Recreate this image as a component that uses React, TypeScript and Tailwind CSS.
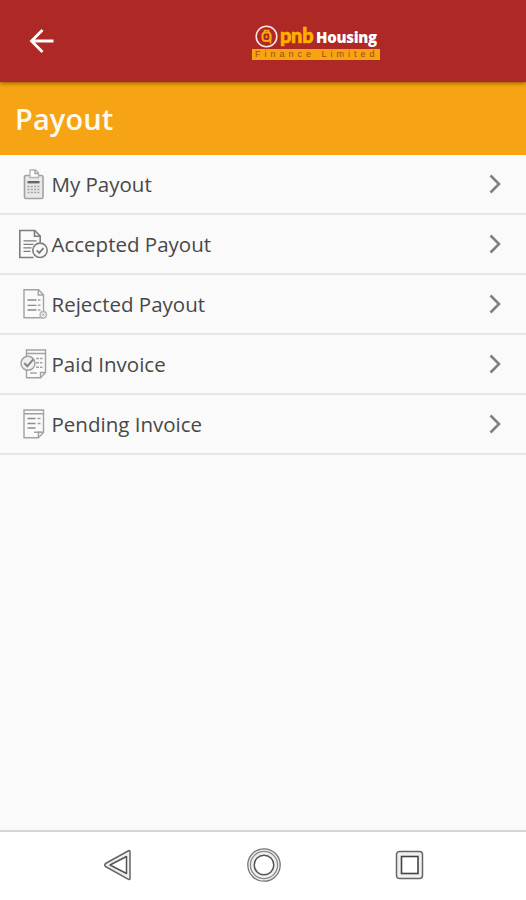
import { ReactNode } from "react";

const CalculatorIcon = () => (
  <>
    <rect x="6.500" y="7.500" width="18.500" height="23" rx="1.500" fill="#e9e9e9" strokeWidth="1.600" />
    <path d="M12 9.500V2h5.500L20.500 5v4.500z" fill="#fff" stroke="#b5b5b5" />
    <path d="M17 2v3.500h3.500" />
    <path d="M9.500 14.200h12" stroke="#666" strokeWidth="2.400" />
    <path d="M9.500 18.500h12M9.500 21.500h12M9.500 24.500h12" strokeDasharray="2 1.300" strokeWidth="1.600" />
  </>
);

const AcceptedIcon = () => (
  <g stroke="#7c7c7c" strokeWidth="1.600">
    <path d="M15.500 29.500H1.800V2.500h15l5.400 5.500v6.500" />
    <path d="M16.500 2.500V8.300h5.500" />
    <path d="M5.500 12.800h13M5.500 16.300h10M5.500 19.800h8M5.500 23.300h7" strokeWidth="1.200" />
    <circle cx="22" cy="22.300" r="7.200" fill="#fafafa" />
    <path d="M18.700 22.300l2.500 2.500 4.300-4.600" strokeWidth="1.900" />
  </g>
);

const RejectedIcon = () => (
  <>
    <path d="M6 1.800h14.500l5 5V29.800H6z" />
    <path d="M20.300 2v5h5" />
    <path d="M9.500 12h9M9.500 17.300h9M9.500 22h9" strokeWidth="1.300" stroke="#8c8c8c" />
    <path d="M20 12h2.500M20 17.300h2.500M20 22h2.500" />
    <circle cx="25.300" cy="26.700" r="3.200" fill="#f0f0f0" stroke="#b5b5b5" />
    <path d="M24.200 25.600l2.200 2.200M26.400 25.600l-2.200 2.200" strokeWidth="0.900" />
  </>
);

const PaidIcon = () => (
  <>
    <path d="M8.500 2h19v22.500l-5 5.300h-14z" />
    <path d="M22.500 29.500v-5h5M9 5.500h18" />
    <path d="M18 10.500h6.500M18 14.800h6.500M18 19.200h6.500" strokeDasharray="3 1" />
    <path d="M12 25h7" />
    <circle cx="10" cy="15.300" r="7" fill="#f0f0f0" strokeWidth="1.500" />
    <path d="M6.300 15l3 3.200 6-6.800" stroke="#858585" strokeWidth="2" />
  </>
);

const PendingIcon = () => (
  <>
    <path d="M6 2h19.500v22.500l-5.200 5.300H6z" />
    <path d="M20.300 29.500l.3-5.500 4.900.3M6 5.800h19.500" />
    <path d="M9.500 10.500h8M9.500 15.500h8M9.500 20h8" stroke="#8c8c8c" strokeWidth="1.300" />
    <path d="M19.500 10.500h3M19.500 15.500h3M16 24.300h4.500" />
  </>
);

const items: { label: string; icon: ReactNode }[] = [
  { label: "My Payout", icon: <CalculatorIcon /> },
  { label: "Accepted Payout", icon: <AcceptedIcon /> },
  { label: "Rejected Payout", icon: <RejectedIcon /> },
  { label: "Paid Invoice", icon: <PaidIcon /> },
  { label: "Pending Invoice", icon: <PendingIcon /> },
];

const Logo = () => (
  <div className="ml-[197px] mt-[24px] w-[128px]">
    <div className="flex h-[25px] items-center pl-[3px]">
      <svg width="23" height="24" viewBox="0 0 23 24" fill="none">
        <circle cx="11.500" cy="11.500" r="10.300" stroke="#fbe3df" strokeWidth="1.600" />
        <rect x="7.500" y="7.500" width="8" height="8.500" rx="3" stroke="#f8a90f" strokeWidth="2" />
        <path d="M15.500 10v8.500M9.500 7V5.500h4V7M11.500 10.500v2.500" stroke="#f8a90f" strokeWidth="1.700" />
      </svg>
      <span className="-mt-[3px] ml-[2px] w-[35px] whitespace-nowrap font-['Lato'] text-[20px] font-black leading-6 tracking-[-0.300px] text-[#ffb000] [-webkit-text-stroke:0.6px_#ffb000]">
        pnb
      </span>
      <span className="whitespace-nowrap pl-px font-['Open_Sans'] text-[15px] font-extrabold leading-5 tracking-[-0.300px] text-white">
        Housing
      </span>
    </div>
    <div className="h-[11px] overflow-hidden whitespace-nowrap bg-[#f6a510] pl-[3px] font-['Liberation_Sans'] text-[9px] leading-[11px] tracking-[4px] text-[#9c4a18]">
      Finance Limited
    </div>
  </div>
);

const Header = () => (
  <header className="relative z-10 flex h-[82px] bg-[#ae2825] shadow-[0_1px_4px_rgba(70,30,0,0.6)]">
    <svg className="ml-[29px] mt-[28px] shrink-0" width="26" height="26" viewBox="0 0 26 26" fill="none" stroke="#fff" strokeWidth="2.800">
      <path d="M24.500 13H3M13.500 2L2.500 13l11 11" />
    </svg>
    <Logo />
  </header>
);

const NavButtons = () => (
  <nav className="flex h-[70px] items-center justify-between border-t-2 border-[#d6d6d6] bg-white pb-[2px] pl-[99px] pr-[98px]">
    <svg width="36" height="36" viewBox="0 0 36 36" fill="none" stroke="#666" strokeWidth="1.500" strokeLinejoin="round">
      <path d="M30 3.500q1 0 1 1v27q0 1.500-1.500.8L6.500 19.500q-1.500-1.500 0-3z" fill="#f0f0f0" />
      <path d="M27.500 9.500v17L11 18z" fill="#fff" stroke="#555" />
    </svg>
    <svg width="36" height="36" viewBox="0 0 36 36" fill="none" stroke="#777">
      <circle cx="18" cy="18" r="16.200" strokeWidth="1.300" fill="#f0f0f0" />
      <circle cx="18" cy="18" r="13.600" strokeWidth="1.300" stroke="#888" />
      <circle cx="18" cy="18" r="9.800" strokeWidth="1.500" stroke="#555" fill="#fff" />
    </svg>
    <svg width="36" height="36" viewBox="0 0 36 36" fill="none" stroke="#666" strokeWidth="1.500">
      <rect x="4.500" y="4.500" width="26" height="27" rx="3" fill="#f0f0f0" />
      <rect x="9.500" y="9.500" width="16.500" height="17" fill="#fff" stroke="#444" strokeWidth="1.600" />
    </svg>
  </nav>
);

export default function App() {
  return (
    <div className="flex h-[900px] w-[526px] flex-col overflow-hidden bg-[#fafafa] font-['Open_Sans',sans-serif]">
      <Header />
      <div className="flex h-[73px] items-center bg-[#f6a414] pl-[15px]">
        <h1 className="text-[29px] font-semibold leading-8 tracking-[0.100px] text-[#fffaf0]">Payout</h1>
      </div>
      <ul className="flex-1">
        {items.map((item) => (
          <li key={item.label} className="flex h-[60px] items-center border-b-2 border-[#e6e6e6] pl-[18px] pr-[24px]">
            <svg className="shrink-0" width="32" height="32" viewBox="0 0 32 32" fill="none" stroke="#a2a2a2" strokeWidth="1.400">
              {item.icon}
            </svg>
            <span className="ml-[1.500px] flex-1 text-[20.500px] leading-7 text-[#484848]">{item.label}</span>
            <svg width="14" height="22" viewBox="0 0 14 22" fill="none" stroke="#808080" strokeWidth="2.600">
              <path d="M2.500 2.500l8.500 8.500-8.500 8.500" />
            </svg>
          </li>
        ))}
      </ul>
      <NavButtons />
    </div>
  );
}
